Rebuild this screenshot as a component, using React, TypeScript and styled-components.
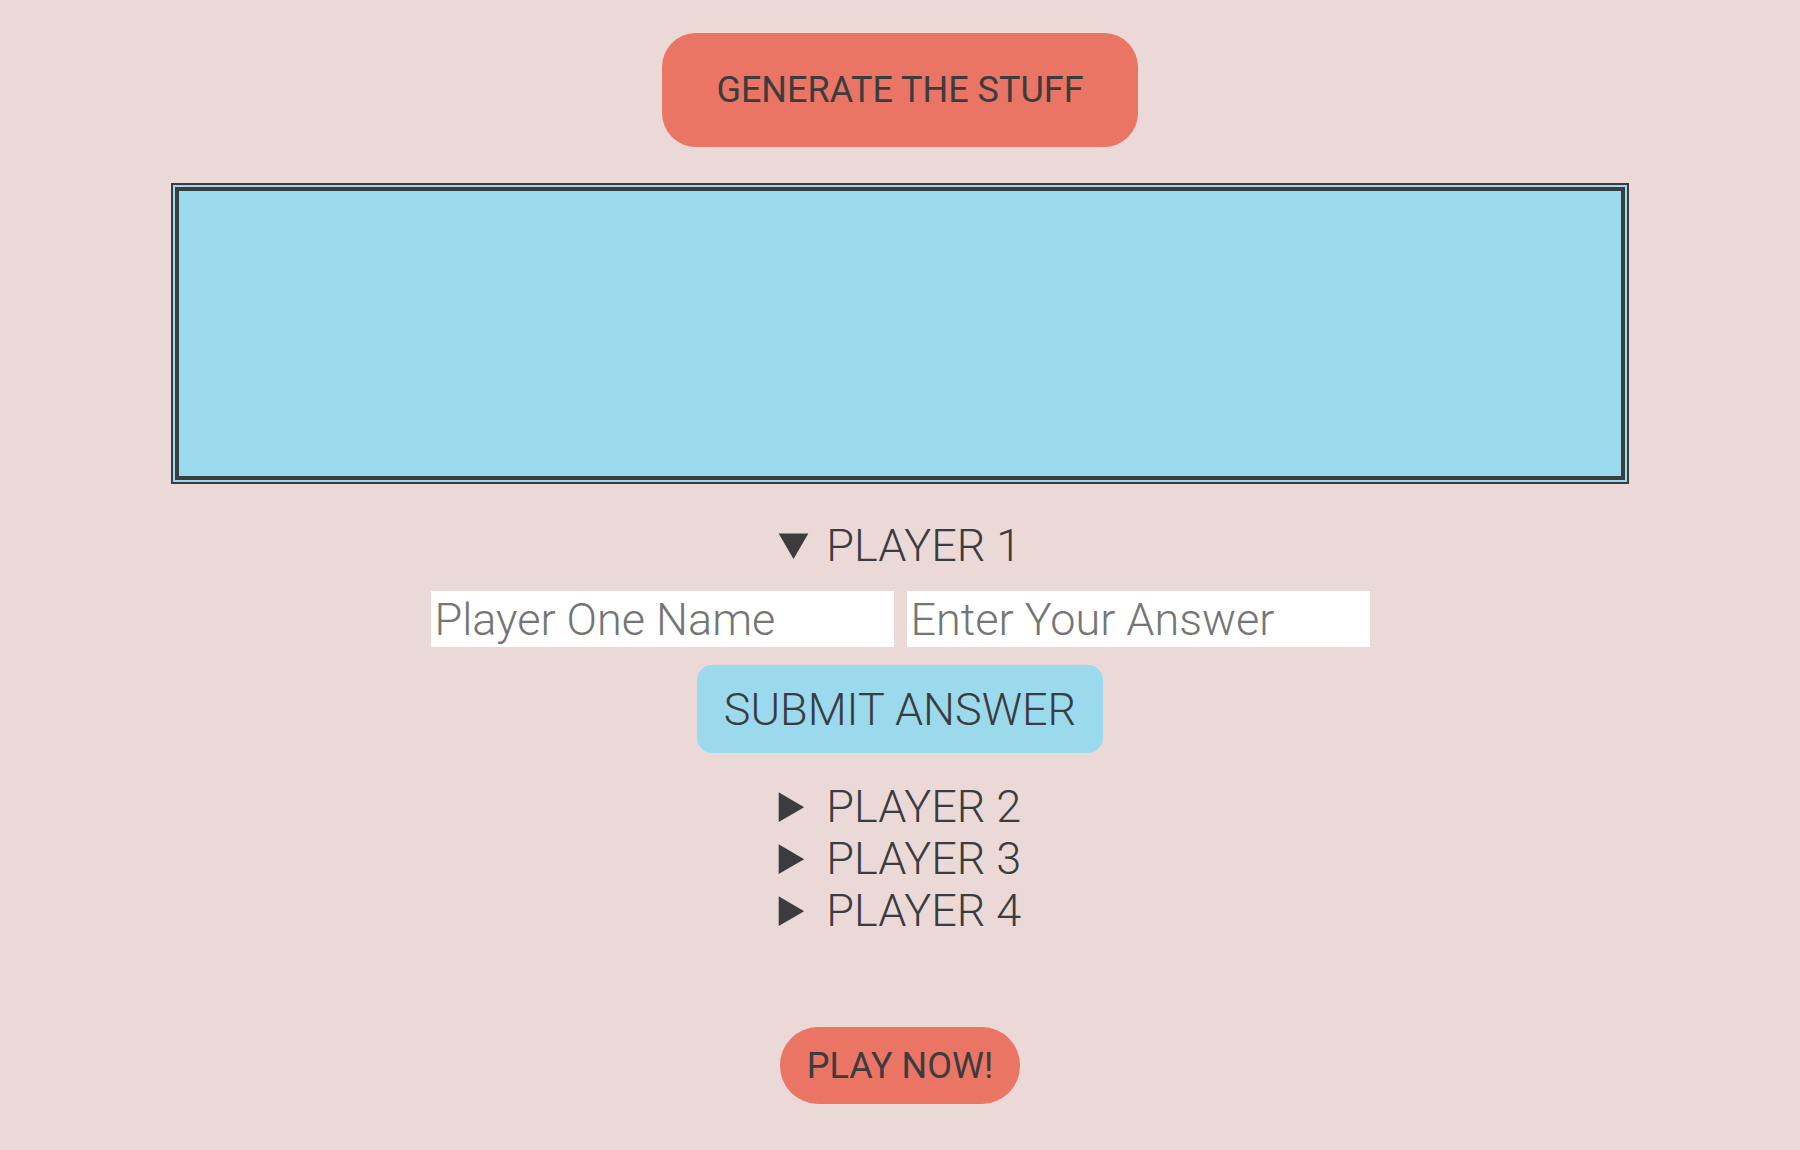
import React from "react";
import styled, { createGlobalStyle } from "styled-components";

const GlobalStyle = createGlobalStyle`
  html, body {
    margin: 0;
    padding: 0;
    background: #ebd9d8;
  }
  body {
    font-family: Roboto, "Liberation Sans", sans-serif;
    color: #3c3c3e;
  }
  * { box-sizing: border-box; }
`;

const Page = styled.main`
  min-height: 1150px;
  display: flex;
  flex-direction: column;
  align-items: center;
  padding-top: 33px;
`;

const PillButton = styled.button`
  font-family: Roboto, "Liberation Sans", sans-serif;
  font-weight: 400;
  font-size: 36px;
  line-height: 42px;
  color: #3c3c3e;
  background: #eb7565;
  border: none;
  cursor: pointer;
  text-transform: uppercase;
`;

const GenerateButton = styled(PillButton)`
  width: 476px;
  height: 114px;
  border-radius: 34px;
`;

const PlayButton = styled(PillButton)`
  width: 240px;
  height: 77px;
  border-radius: 38px;
  margin-top: 90px;
`;

const Stage = styled.section`
  margin-top: 36px;
  width: 1458px;
  padding: 2px;
  border: 2px solid #3c3c3e;
  background: #9bd9ec;
`;

const StageInner = styled.div`
  height: 285px;
  border: 4px solid #3c3c3e;
  background: #9bd9ec;
  box-sizing: content-box;
`;

const Players = styled.div`
  margin-top: 36px;
  display: flex;
  flex-direction: column;
  align-items: center;
`;

const Player = styled.details`
  width: 100%;
  display: flex;
  flex-direction: column;
  align-items: center;
`;

const Summary = styled.summary`
  font-family: Roboto, "Liberation Sans", sans-serif;
  font-weight: 300;
  font-size: 45px;
  line-height: 52px;
  color: #3c3c3e;
  text-align: center;
  cursor: pointer;
  text-transform: uppercase;
`;

const Body = styled.div`
  display: flex;
  flex-direction: column;
  align-items: center;
  padding-bottom: 28px;
`;

const InputRow = styled.div`
  margin-top: 19px;
  display: flex;
  gap: 13px;
`;

const TextInput = styled.input`
  width: 463px;
  height: 56px;
  border: none;
  outline: none;
  background: #ffffff;
  padding: 0 4px;
  font-family: Roboto, "Liberation Sans", sans-serif;
  font-weight: 300;
  font-size: 45px;
  color: #3c3c3e;
  &::placeholder {
    color: #757575;
  }
`;

const SubmitButton = styled.button`
  margin-top: 18px;
  width: 406px;
  height: 88px;
  border: none;
  border-radius: 15px;
  background: #9bd9ec;
  color: #3c3c3e;
  font-family: Roboto, "Liberation Sans", sans-serif;
  font-weight: 300;
  font-size: 45px;
  cursor: pointer;
`;

export default function App() {
  return (
    <>
      <GlobalStyle />
      <Page>
        <GenerateButton>Generate the stuff</GenerateButton>
        <Stage>
          <StageInner />
        </Stage>
        <Players>
          <Player open>
            <Summary>Player 1</Summary>
            <Body>
              <InputRow>
                <TextInput placeholder="Player One Name" />
                <TextInput placeholder="Enter Your Answer" />
              </InputRow>
              <SubmitButton>SUBMIT ANSWER</SubmitButton>
            </Body>
          </Player>
          <Player>
            <Summary>Player 2</Summary>
          </Player>
          <Player>
            <Summary>Player 3</Summary>
          </Player>
          <Player>
            <Summary>Player 4</Summary>
          </Player>
        </Players>
        <PlayButton>Play now!</PlayButton>
      </Page>
    </>
  );
}
